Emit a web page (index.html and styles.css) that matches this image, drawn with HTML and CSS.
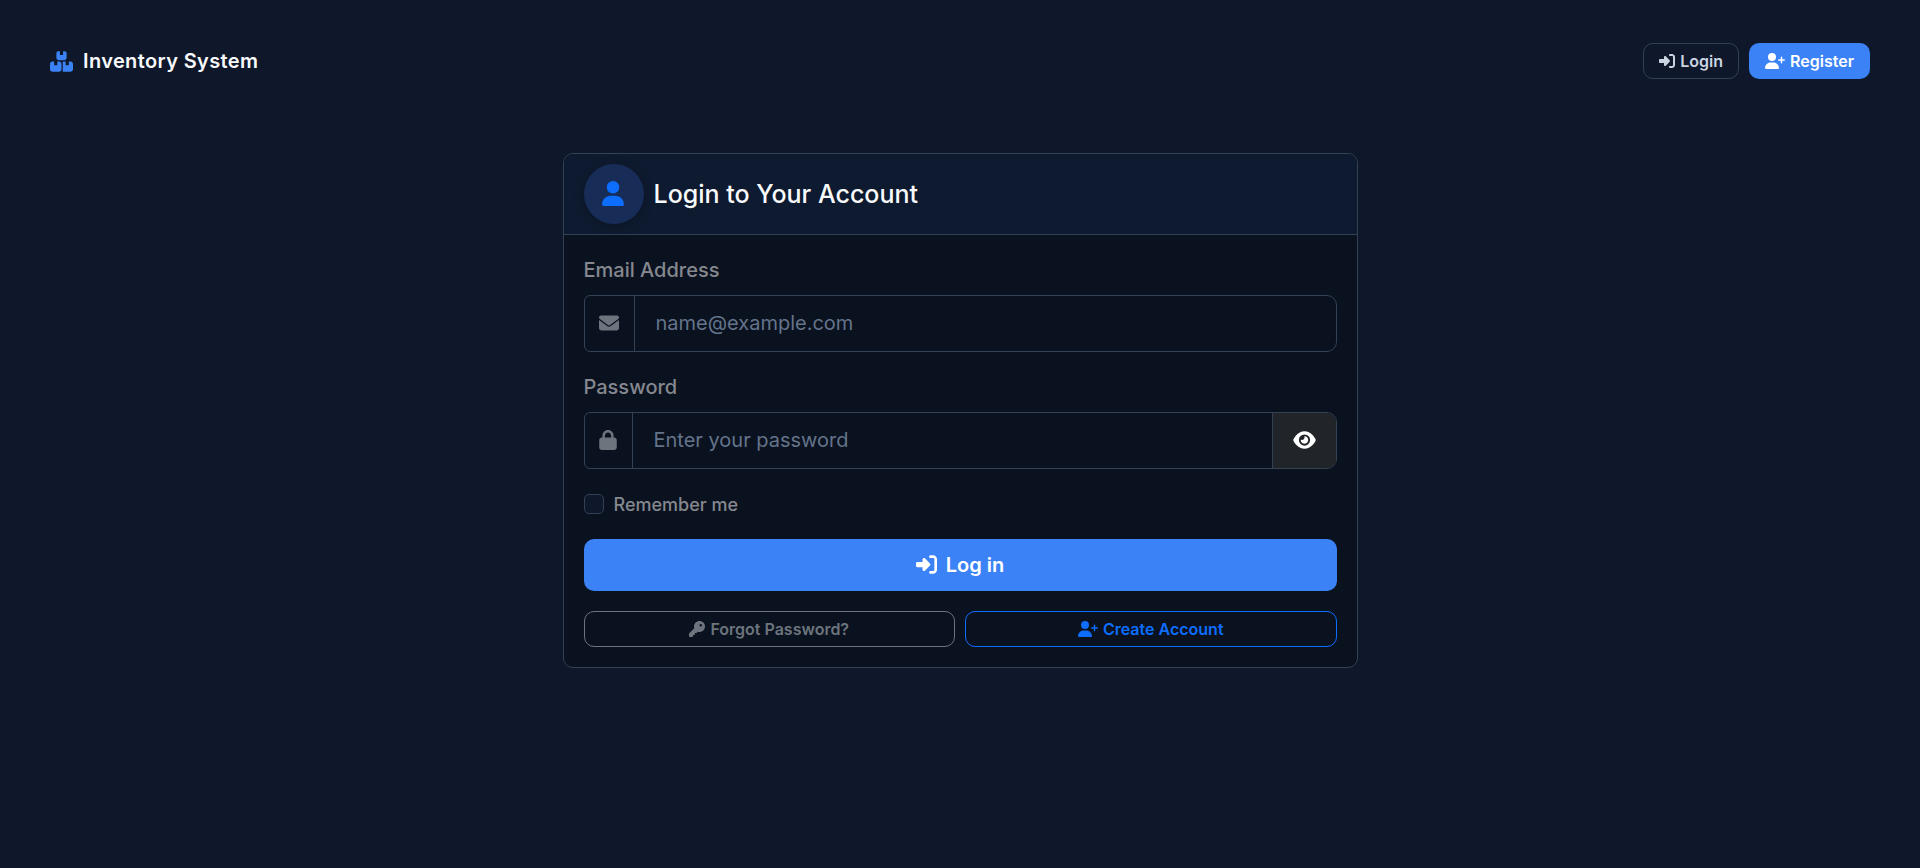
FILE: index.html
```html
<!DOCTYPE html>
<html lang="en">
<head>
<meta charset="utf-8">
<title>Login - Inventory System</title>
<link rel="stylesheet" href="styles.css">
</head>
<body>
<svg class="sprite" aria-hidden="true">
  <symbol id="user" viewBox="0 0 448 512"><path d="M224 256A128 128 0 1 0 224 0a128 128 0 1 0 0 256zm-45.7 48C79.8 304 0 383.8 0 482.3C0 498.7 13.3 512 29.7 512l388.6 0c16.4 0 29.7-13.3 29.7-29.7C448 383.8 368.2 304 269.7 304l-91.4 0z"/></symbol>
  <symbol id="user-plus" viewBox="0 0 640 512"><path d="M96 128a128 128 0 1 1 256 0A128 128 0 1 1 96 128zM0 482.3C0 383.8 79.8 304 178.3 304l91.4 0C368.2 304 448 383.8 448 482.3c0 16.4-13.3 29.7-29.7 29.7L29.7 512C13.3 512 0 498.7 0 482.3zM504 312l0-64-64 0c-13.3 0-24-10.7-24-24s10.7-24 24-24l64 0 0-64c0-13.3 10.7-24 24-24s24 10.7 24 24l0 64 64 0c13.3 0 24 10.7 24 24s-10.7 24-24 24l-64 0 0 64c0 13.3-10.7 24-24 24s-24-10.7-24-24z"/></symbol>
  <symbol id="envelope" viewBox="0 0 512 512"><path d="M48 64C21.5 64 0 85.5 0 112c0 15.1 7.1 29.3 19.2 38.4L236.8 313.6c11.4 8.5 27 8.5 38.4 0L492.8 150.4c12.1-9.1 19.2-23.3 19.2-38.4c0-26.5-21.5-48-48-48L48 64zM0 176L0 384c0 35.3 28.7 64 64 64l384 0c35.3 0 64-28.7 64-64l0-208L294.4 339.2c-22.8 17.1-54 17.1-76.8 0L0 176z"/></symbol>
  <symbol id="lock" viewBox="0 0 448 512"><path d="M144 144l0 48 160 0 0-48c0-44.2-35.8-80-80-80s-80 35.8-80 80zM80 192l0-48C80 64.5 144.5 0 224 0s144 64.5 144 144l0 48 16 0c35.3 0 64 28.7 64 64l0 192c0 35.3-28.7 64-64 64L64 512c-35.3 0-64-28.7-64-64L0 256c0-35.3 28.7-64 64-64l16 0z"/></symbol>
  <symbol id="eye" viewBox="0 0 576 512"><path d="M288 32c-80.8 0-145.5 36.8-192.6 80.6C48.6 156 17.3 208 2.5 243.7c-3.3 7.9-3.3 16.7 0 24.6C17.3 304 48.6 356 95.4 399.4C142.5 443.2 207.2 480 288 480s145.5-36.8 192.6-80.6c46.8-43.5 78.1-95.4 93-131.1c3.3-7.9 3.3-16.7 0-24.6c-14.9-35.7-46.2-87.7-93-131.1C433.5 68.8 368.8 32 288 32zM144 256a144 144 0 1 1 288 0 144 144 0 1 1 -288 0zm144-64c0 35.3-28.7 64-64 64c-7.1 0-13.9-1.2-20.3-3.3c-5.5-1.8-11.9 1.6-11.7 7.4c.3 6.9 1.3 13.8 3.2 20.7c13.7 51.2 66.4 81.6 117.6 67.9s81.6-66.4 67.9-117.6c-11.1-41.5-47.8-69.4-88.6-71.1c-5.8-.2-9.2 6.1-7.4 11.7c2.1 6.4 3.3 13.2 3.3 20.3z"/></symbol>
  <symbol id="key" viewBox="0 0 512 512"><path d="M336 352c97.2 0 176-78.8 176-176S433.2 0 336 0S160 78.8 160 176c0 18.7 2.9 36.8 8.3 53.7L7 391c-4.5 4.5-7 10.6-7 17l0 80c0 13.3 10.7 24 24 24l80 0c13.3 0 24-10.7 24-24l0-40 40 0c13.3 0 24-10.7 24-24l0-40 40 0c6.4 0 12.5-2.5 17-7l33.3-33.3c16.9 5.4 35 8.3 53.7 8.3zM376 96a40 40 0 1 1 0 80 40 40 0 1 1 0-80z"/></symbol>
  <symbol id="sign-in" viewBox="0 0 512 512"><path d="M217.9 105.9L340.7 228.7c7.2 7.2 11.3 17.1 11.3 27.3s-4.1 20.1-11.3 27.3L217.9 406.1c-6.4 6.4-15 9.9-24 9.9c-18.7 0-33.9-15.2-33.9-33.9l0-62.1L32 320c-17.7 0-32-14.3-32-32l0-64c0-17.7 14.3-32 32-32l128 0 0-62.1c0-18.7 15.2-33.9 33.9-33.9c9 0 17.6 3.6 24 9.9zM352 416l64 0c17.7 0 32-14.3 32-32l0-256c0-17.7-14.3-32-32-32l-64 0c-17.7 0-32-14.3-32-32s14.3-32 32-32l64 0c53 0 96 43 96 96l0 256c0 53-43 96-96 96l-64 0c-17.7 0-32-14.3-32-32s14.3-32 32-32z"/></symbol>
  <symbol id="boxes" viewBox="0 0 576 512"><path d="M248 0L208 0c-26.5 0-48 21.5-48 48l0 112c0 35.3 28.7 64 64 64l128 0c35.3 0 64-28.7 64-64l0-112c0-26.5-21.5-48-48-48L328 0l0 80c0 8.8-7.2 16-16 16l-48 0c-8.8 0-16-7.2-16-16l0-80zM64 256c-35.3 0-64 28.7-64 64L0 448c0 35.3 28.7 64 64 64l160 0c35.3 0 64-28.7 64-64l0-128c0-35.3-28.7-64-64-64l-40 0 0 80c0 8.8-7.2 16-16 16l-48 0c-8.8 0-16-7.2-16-16l0-80-40 0zM352 512l160 0c35.3 0 64-28.7 64-64l0-128c0-35.3-28.7-64-64-64l-40 0 0 80c0 8.8-7.2 16-16 16l-48 0c-8.8 0-16-7.2-16-16l0-80-40 0c-15 0-28.8 5.1-39.7 13.8c4.9 10.4 7.7 22 7.7 34.2l0 160c0 12.2-2.8 23.8-7.7 34.2C323.2 506.9 337 512 352 512z"/></symbol>
</svg>

<nav class="navbar">
  <a class="brand"><svg class="icon icon-boxes"><use href="#boxes"/></svg><span>Inventory System</span></a>
  <div class="nav-actions">
    <a class="btn btn-ghost"><svg class="icon icon-sm"><use href="#sign-in"/></svg>Login</a>
    <a class="btn btn-primary"><svg class="icon icon-plus"><use href="#user-plus"/></svg>Register</a>
  </div>
</nav>

<main class="card">
  <header class="card-header">
    <div class="avatar"><svg class="icon icon-user"><use href="#user"/></svg></div>
    <h1 class="title">Login to Your Account</h1>
  </header>
  <form class="card-body">
    <label class="label" for="email">Email Address</label>
    <div class="input-group">
      <span class="addon"><svg class="icon icon-md"><use href="#envelope"/></svg></span>
      <input class="input" id="email" type="email" placeholder="name@example.com">
    </div>
    <label class="label" for="password">Password</label>
    <div class="input-group">
      <span class="addon"><svg class="icon icon-lock"><use href="#lock"/></svg></span>
      <input class="input" id="password" type="password" placeholder="Enter your password">
      <button class="toggle" type="button" aria-label="Show password"><svg class="icon icon-eye"><use href="#eye"/></svg></button>
    </div>
    <label class="remember"><input class="checkbox" type="checkbox"><span>Remember me</span></label>
    <button class="submit" type="button"><svg class="icon icon-lg"><use href="#sign-in"/></svg>Log in</button>
    <div class="links">
      <a class="btn btn-secondary"><svg class="icon icon-sm"><use href="#key"/></svg>Forgot Password?</a>
      <a class="btn btn-outline"><svg class="icon icon-plus"><use href="#user-plus"/></svg>Create Account</a>
    </div>
  </form>
</main>
</body>
</html>
```
FILE: styles.css
```css
* { box-sizing: border-box; }

body {
  margin: 0;
  min-height: 100vh;
  background: #0f172a;
  color: #f8fafc;
  font-family: Inter, "Liberation Sans", sans-serif;
  font-size: 20px;
}

.sprite { display: none; }
.icon { display: block; flex: none; fill: currentColor; }
.icon-sm { width: 16px; height: 16px; }
.icon-plus { width: 20px; height: 16px; }
.icon-md { width: 20px; height: 20px; }
.icon-lg { width: 21px; height: 21px; }
.icon-lock { width: 18px; height: 20px; }
.icon-eye { width: 23px; height: 20px; }
.icon-user { width: 22px; height: 25px; }
.icon-boxes { width: 23px; height: 21px; color: #3b82f6; }

.navbar {
  display: flex;
  justify-content: space-between;
  align-items: center;
  padding: 43px 50px 0;
}
.brand {
  display: flex;
  align-items: center;
  gap: 10px;
  font-weight: 600;
  letter-spacing: 0.37px;
}
.nav-actions { display: flex; gap: 10px; }

.btn {
  display: flex;
  align-items: center;
  justify-content: center;
  gap: 5px;
  height: 36px;
  padding: 0 15px;
  border: 1px solid transparent;
  border-radius: 10px;
  font-size: 16px;
  font-weight: 600;
  white-space: nowrap;
}
.btn-ghost { border-color: #334155; color: #cbd5e1; }
.btn-primary { background: #3b82f6; color: #fff; }
.btn-secondary { border-color: #6c757d; color: #6c757d; }
.btn-outline { border-color: #0d6efd; color: #0d6efd; }

.card {
  width: 795px;
  margin: 74px auto 0;
  border: 1px solid #334155;
  border-radius: 10px;
  background: #0a111f;
  overflow: hidden;
}
.card-header {
  display: flex;
  align-items: center;
  gap: 10px;
  height: 81px;
  padding: 0 20px;
  border-bottom: 1px solid #334155;
  background: #0e1a2f;
}
.avatar {
  display: flex;
  align-items: center;
  justify-content: center;
  width: 60px;
  height: 60px;
  padding: 0 1px 1px 0;
  border-radius: 50%;
  background: #172d57;
  color: #0d6efd;
  box-shadow: 0 2px 12px rgba(0, 0, 0, 0.2);
}
.title { margin: 0; font-size: 25px; font-weight: 500; }

.card-body { padding: 20px; }
.label {
  display: block;
  margin-bottom: 10px;
  color: #85888f;
  font-weight: 500;
  line-height: 30px;
}
.input-group {
  display: flex;
  height: 57px;
  margin-bottom: 20px;
  border: 1px solid #334155;
  border-radius: 6px 10px 10px 6px;
  overflow: hidden;
}
.addon {
  display: flex;
  align-items: center;
  padding: 0 15px 2px 14px;
  border-right: 1px solid #334155;
  color: #6c757d;
}
.input {
  flex: 1;
  min-width: 0;
  padding: 0 20px 2px 21px;
  border: 0;
  background: transparent;
  color: #f8fafc;
  font: inherit;
}
.input::placeholder { color: #64748b; opacity: 1; }
.toggle {
  display: flex;
  align-items: center;
  justify-content: center;
  width: 64px;
  padding: 0 0 2px;
  border: 0;
  border-left: 1px solid #334155;
  background: #212529;
  color: #fff;
}
.remember {
  display: flex;
  align-items: center;
  gap: 10px;
  height: 30px;
  margin-bottom: 20px;
  color: #85888f;
  font-size: 18px;
  font-weight: 500;
}
.checkbox {
  appearance: none;
  width: 20px;
  height: 20px;
  margin: 0;
  border: 1px solid #334155;
  border-radius: 5px;
  background: #0f172a;
}
.submit {
  display: flex;
  align-items: center;
  justify-content: center;
  gap: 9px;
  width: 100%;
  height: 52px;
  margin-bottom: 20px;
  padding: 0 0 1px;
  border: 0;
  border-radius: 10px;
  background: #3b82f6;
  color: #fff;
  font: inherit;
  font-weight: 600;
}
.links { display: grid; grid-template-columns: 1fr 1fr; gap: 10px; }
```
